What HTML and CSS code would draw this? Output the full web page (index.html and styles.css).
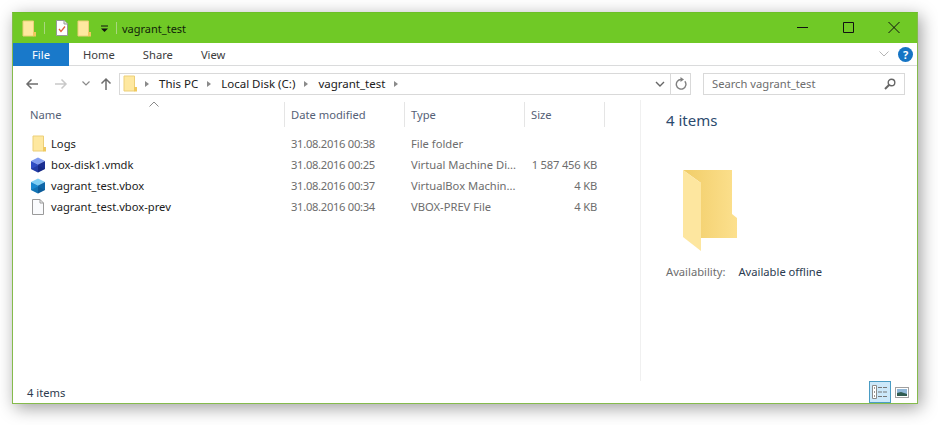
FILE: index.html
```html
<!DOCTYPE html>
<html lang="en">
<head>
<meta charset="utf-8">
<title>vagrant_test</title>
<link rel="stylesheet" href="styles.css">
</head>
<body>
<svg class="defs" width="0" height="0" aria-hidden="true">
  <defs>
    <symbol id="folder" viewBox="0 0 14 17">
      <path d="M1 1h10.500v15H1z" fill="#fee8a0" stroke="#eccf78" stroke-width="1"/>
      <path d="M11 12h3v4.500h-3z" fill="#efc95f"/>
    </symbol>
    <linearGradient id="fback" x1="0" y1="0" x2="1" y2="0">
      <stop offset="0" stop-color="#f1cd68"/>
      <stop offset="1" stop-color="#fce08e"/>
    </linearGradient>
  </defs>
</svg>
<div class="window">
  <header class="titlebar">
    <svg class="qa-folder"><use href="#folder"/></svg>
    <span class="tb-sep"></span>
    <svg class="qa-doc" viewBox="0 0 12 16">
      <path d="M.5.500h7.500l3.500 3.500v11.500H.5z" fill="#fff" stroke="#999"/>
      <path d="M8 .5v3.500h3.500" fill="#e8e8e8" stroke="#999"/>
      <path d="M3 9l2 2.500 4-5" fill="none" stroke="#e2603a" stroke-width="1.300"/>
    </svg>
    <svg class="qa-folder qa-folder2"><use href="#folder"/></svg>
    <svg class="qa-drop" viewBox="0 0 9 8">
      <path d="M1 1h7" stroke="#111" stroke-width="1"/>
      <path d="M1 3.500h7L4.500 7z" fill="#111"/>
    </svg>
    <span class="tb-sep"></span>
    <span class="win-title">vagrant_test</span>
    <div class="win-buttons">
      <svg class="wb" viewBox="0 0 46 30"><path d="M18 14.500h11" stroke="#111" fill="none"/></svg>
      <svg class="wb" viewBox="0 0 46 30"><path d="M18.500 9.500h10v10h-10z" stroke="#111" fill="none"/></svg>
      <svg class="wb" viewBox="0 0 46 30"><path d="M17.500 9l11 11M28.500 9l-11 11" stroke="#111" fill="none"/></svg>
    </div>
  </header>

  <nav class="tabs">
    <span class="tab-file">File</span>
    <span class="tab">Home</span>
    <span class="tab">Share</span>
    <span class="tab">View</span>
    <svg class="ribbon-chev" viewBox="0 0 10 6"><path d="M.5.500 5 5 9.500.500" fill="none" stroke="#b5b5b5"/></svg>
    <span class="help">?</span>
  </nav>

  <div class="addressrow">
    <svg class="nav nav-back" viewBox="0 0 14 12"><path d="M13 6H2M6.500 1.500 2 6l4.500 4.500" fill="none" stroke="#6d6d6d" stroke-width="1.500"/></svg>
    <svg class="nav nav-fwd" viewBox="0 0 14 12"><path d="M1 6h11M7.500 1.500 12 6l-4.500 4.500" fill="none" stroke="#c9c9c9" stroke-width="1.500"/></svg>
    <svg class="nav nav-down" viewBox="0 0 8 5"><path d="M.5.500 4 4 7.500.500" fill="none" stroke="#8a8a8a" stroke-width="1.200"/></svg>
    <svg class="nav nav-up" viewBox="0 0 12 14"><path d="M6 13V2M1.500 6.500 6 2l4.500 4.500" fill="none" stroke="#6d6d6d" stroke-width="1.500"/></svg>
    <div class="addressbox">
      <svg class="addr-folder"><use href="#folder"/></svg>
      <span class="crumb-sep"></span><span class="crumb">This PC</span>
      <span class="crumb-sep"></span><span class="crumb">Local Disk (C:)</span>
      <span class="crumb-sep"></span><span class="crumb">vagrant_test</span>
      <span class="crumb-sep"></span>
      <span class="addr-spacer"></span>
      <svg class="addr-chev" viewBox="0 0 10 6"><path d="M1 1l4 4 4-4" fill="none" stroke="#666" stroke-width="1.400"/></svg>
      <span class="addr-refresh">
        <svg viewBox="0 0 12 13" class="refresh"><path d="M9.800 4.200A4.800 4.800 0 1 1 6 2.500" fill="none" stroke="#808080" stroke-width="1.400"/><path d="M5.500 0 9 2.500 5.500 5z" fill="#808080"/></svg>
      </span>
    </div>
    <div class="searchbox">
      <span class="search-text">Search vagrant_test</span>
      <svg class="search-icon" viewBox="0 0 12 12"><circle cx="7.500" cy="4.500" r="3.300" fill="none" stroke="#666" stroke-width="1.400"/><path d="M5 7 1 11" stroke="#666" stroke-width="2"/></svg>
    </div>
  </div>

  <main class="content">
    <section class="list">
      <div class="row header">
        <svg class="sort" viewBox="0 0 10 6"><path d="M.5 5.500 5 1l4.500 4.500" fill="none" stroke="#8a8a8a"/></svg>
        <span class="col-name">Name</span>
        <span class="col-h">Date modified</span>
        <span class="col-h">Type</span>
        <span class="col-h">Size</span>
      </div>
      <div class="rows">
        <div class="row item">
          <span class="name"><svg class="file-icon folder-icon"><use href="#folder"/></svg>Logs</span>
          <span class="cell date">31.08.2016 00:38</span>
          <span class="cell">File folder</span>
          <span class="cell size"></span>
        </div>
        <div class="row item">
          <span class="name">
            <svg class="file-icon" viewBox="0 0 16 16"><path d="M8 .500 15 4 8 7.500 1 4z" fill="#7f9bf0"/><path d="M1 4 8 7.500v8L1 12z" fill="#2f4cc4"/><path d="M15 4 8 7.500v8L15 12z" fill="#1b2f92"/><path d="M1 12l7-3.500 7 3.500-7 3.500z" fill="#0f1f70" opacity=".35"/></svg>box-disk1.vmdk</span>
          <span class="cell date">31.08.2016 00:25</span>
          <span class="cell">Virtual Machine Di...</span>
          <span class="cell size">1 587 456 KB</span>
        </div>
        <div class="row item">
          <span class="name">
            <svg class="file-icon" viewBox="0 0 16 16"><path d="M8 .500 15 4 8 7.500 1 4z" fill="#7fd0f5"/><path d="M1 4 8 7.500v8L1 12z" fill="#1b8ad0"/><path d="M15 4 8 7.500v8L15 12z" fill="#0f66a8"/><path d="M1 12l7-3.500 7 3.500-7 3.500z" fill="#084a80" opacity=".35"/></svg>vagrant_test.vbox</span>
          <span class="cell date">31.08.2016 00:37</span>
          <span class="cell">VirtualBox Machin...</span>
          <span class="cell size">4 KB</span>
        </div>
        <div class="row item">
          <span class="name">
            <svg class="file-icon" viewBox="0 0 16 16"><path d="M2.500.500h7.500l3.500 3.500v11.500h-11z" fill="#fafbfd" stroke="#9a9a9a"/><path d="M10 .500V4h3.500" fill="none" stroke="#9a9a9a"/></svg>vagrant_test.vbox-prev</span>
          <span class="cell date">31.08.2016 00:34</span>
          <span class="cell">VBOX-PREV File</span>
          <span class="cell size">4 KB</span>
        </div>
      </div>
    </section>
    <aside class="details">
      <div class="details-title">4 items</div>
      <svg class="big-folder" viewBox="0 0 54 81">
        <path d="M0 0h49v44l5 4v20H18V13z" fill="url(#fback)"/>
        <path d="M0 0l18 13v68L0 67z" fill="#fde69f"/>
      </svg>
      <div class="avail"><span class="avail-label">Availability:</span><span class="avail-value">Available offline</span></div>
    </aside>
  </main>

  <footer class="status">
    <span class="status-text">4 items</span>
    <span class="status-spacer"></span>
    <span class="view-btn active">
      <svg viewBox="0 0 16 14" class="view-icon"><path d="M.5.500h4v13h-4z" fill="#fff" stroke="#8a8a8a"/><path d="M2 3h1M2 7h1M2 11h1" stroke="#333"/><path d="M6 2.500h4M11 2.500h4M6 7h4M11 7h4M6 11.500h4M11 11.500h4" stroke="#777"/></svg>
    </span>
    <span class="view-btn thumb">
      <svg viewBox="0 0 14 11" class="thumb-icon"><rect x=".5" y=".5" width="13" height="10" fill="#fff" stroke="#a0a0a0"/><rect x="2" y="2" width="10" height="7" fill="#8fb7d8"/><path d="M2 6l4-1 6 2v2H2z" fill="#2f5b50"/></svg>
    </span>
  </footer>
</div>
</body>
</html>
```
FILE: styles.css
```css
* { box-sizing: border-box; }
html, body { margin: 0; padding: 0; background: #fff; }
body {
  width: 938px;
  height: 425px;
  overflow: hidden;
  padding: 12px 20px 21px 12px;
  font-family: "Noto Sans", "Open Sans", sans-serif;
  font-size: 11.2px;
  color: #1c1c1c;
}
.defs { position: absolute; }
.window {
  height: 392px;
  display: flex;
  flex-direction: column;
  background: #fff;
  border: 1px solid #85bb4c;
  border-top-color: #6cbf27;
  box-shadow: 3px 4px 16px rgba(0, 0, 0, .38);
}

/* Title bar */
.titlebar {
  height: 30px;
  flex: none;
  display: flex;
  align-items: center;
  background: #70c926;
  padding-left: 9px;
}
.qa-folder { width: 14px; height: 17px; flex: none; }
.tb-sep { width: 1px; height: 12px; background: #a9d77f; margin-left: 8px; flex: none; }
.qa-doc { width: 12px; height: 16px; margin-left: 11px; flex: none; }
.qa-folder2 { margin-left: 9px; }
.qa-drop { width: 9px; height: 8px; margin-left: 9px; margin-top: 2px; flex: none; }
.qa-drop + .tb-sep { margin-left: 7px; }
.win-title { margin-left: 5px; font-size: 11px; color: #10240a; }
.win-buttons { margin-left: auto; display: flex; }
.wb { width: 46px; height: 30px; display: block; }

/* Tabs */
.tabs {
  height: 23px;
  flex: none;
  display: flex;
  align-items: center;
  border-bottom: 1px solid #dadbdc;
  color: #3c3c3c;
  padding-right: 4px;
}
.tab-file {
  width: 56px;
  height: 23px;
  background: #1979ca;
  color: #fff;
  display: flex;
  align-items: center;
  justify-content: center;
}
.tab { margin-left: 14px; margin-right: 14px; }
.ribbon-chev { width: 10px; height: 6px; margin-left: auto; }
.help {
  width: 15px;
  height: 15px;
  border-radius: 50%;
  background: #1574c4;
  color: #fff;
  font-size: 11px;
  font-weight: 700;
  line-height: 15px;
  text-align: center;
  margin-left: 9px;
}

/* Address row */
.addressrow {
  height: 34px;
  flex: none;
  display: flex;
  align-items: center;
  padding-left: 12px;
  padding-top: 1px;
}
.nav { flex: none; }
.nav-back { width: 14px; height: 12px; }
.nav-fwd { width: 14px; height: 12px; margin-left: 15px; }
.nav-down { width: 8px; height: 5px; margin-left: 14px; }
.nav-up { width: 12px; height: 14px; margin-left: 10px; }
.addressbox {
  width: 572px;
  height: 22px;
  margin-left: 7px;
  display: flex;
  align-items: center;
  border: 1px solid #d9d9d9;
  padding-left: 3px;
  color: #202020;
}
.addr-folder { width: 14px; height: 17px; flex: none; margin-right: -1px; }
.crumb-sep {
  width: 0;
  height: 0;
  margin-left: 9px;
  margin-right: 10px;
  border-left: 4px solid #8a8a8a;
  border-top: 3.500px solid transparent;
  border-bottom: 3.500px solid transparent;
}
.crumb { white-space: nowrap; font-size: 11.5px; }
.addr-spacer { flex: 1; }
.addr-chev { width: 10px; height: 6px; margin-right: 5px; }
.addr-refresh {
  width: 20px;
  height: 20px;
  border-left: 1px solid #d9d9d9;
  display: flex;
  align-items: center;
  justify-content: center;
}
.refresh { width: 12px; height: 13px; }
.searchbox {
  width: 202px;
  height: 22px;
  margin-left: 12px;
  display: flex;
  align-items: center;
  justify-content: space-between;
  border: 1px solid #d9d9d9;
  padding: 0 8px;
  color: #6d6d6d;
}
.search-icon { width: 12px; height: 12px; }

/* Content */
.content { flex: 1; min-height: 0; display: flex; }
.list { width: 628px; flex: none; border-right: 1px solid #f0f0f0; }
.row {
  display: grid;
  grid-template-columns: 254px 120px 120px 81px;
  padding-left: 17px;
  align-items: center;
}
.header { height: 29px; position: relative; color: #556176; }
.sort { position: absolute; left: 136px; top: 1px; width: 10px; height: 6px; }
.col-h {
  height: 25px;
  line-height: 25px;
  padding-left: 6px;
  border-left: 1px solid #e5e5e5;
}
.col-h:last-child { border-right: 1px solid #e5e5e5; }
.rows { padding-top: 4px; }
.item { height: 21px; }
.name {
  display: flex;
  align-items: center;
  gap: 5px;
  color: #1c1c1c;
}
.file-icon { width: 16px; height: 16px; flex: none; }
.folder-icon { width: 14px; height: 17px; margin-left: 2px; }
.cell { padding-left: 7px; color: #6d6d6d; white-space: nowrap; }
.date { letter-spacing: -.3px; }
.size { text-align: right; padding-left: 0; padding-right: 8px; letter-spacing: -.2px; }

/* Details pane */
.details { flex: 1; padding: 10px 0 0 25px; }
.details-title { font-size: 15px; color: #2c4a6e; line-height: 20px; }
.big-folder { display: block; width: 54px; height: 81px; margin: 40px 0 0 17px; }
.avail { margin-top: 13px; display: flex; gap: 13px; }
.avail-label { color: #6d6d6d; }
.avail-value { color: #2a3a50; }

/* Status bar */
.status { height: 22px; flex: none; display: flex; align-items: center; padding-left: 14px; padding-right: 6px; color: #2c3a4e; }
.status-spacer { flex: 1; }
.view-btn { width: 22px; height: 22px; display: flex; align-items: center; justify-content: center; }
.view-btn.active { background: #cce8fa; border: 1px solid #4a9cc4; }
.view-btn.thumb { width: 18px; margin-left: 2px; }
.view-icon { width: 16px; height: 14px; }
.thumb-icon { width: 14px; height: 11px; }
```
